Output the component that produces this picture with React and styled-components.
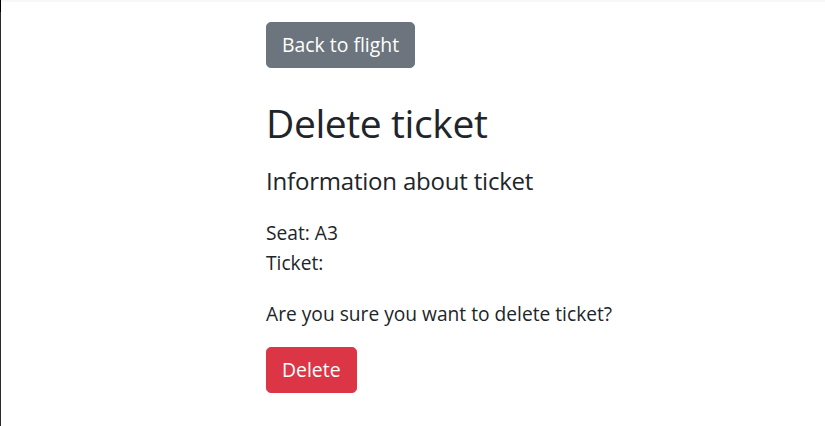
import React from "react";
import styled, { createGlobalStyle } from "styled-components";

const GlobalStyle = createGlobalStyle`
  html, body {
    margin: 0;
    padding: 0;
    background: #ffffff;
  }
  body {
    font-family: "Open Sans", "Noto Sans", sans-serif;
    color: #212529;
  }
`;

const Frame = styled.div`
  min-height: 426px;
  box-sizing: border-box;
  border-left: 1px solid #2b2b2b;
  border-top: 2px solid #f7f7f7;
  position: relative;

  &::before {
    content: "";
    position: absolute;
    left: -1px;
    top: -2px;
    width: 1px;
    height: 12px;
    background: #000;
  }
`;

const Container = styled.main`
  padding: 20px 0 0 265px;
  display: flex;
  flex-direction: column;
  align-items: flex-start;
`;

const Button = styled.button`
  font-family: inherit;
  font-size: 19.4px;
  line-height: 28px;
  padding: 8px 15px;
  height: 46px;
  border: 1px solid ${(p) => (p.$variant === "danger" ? "#dc3545" : "#6c757d")};
  background: ${(p) => (p.$variant === "danger" ? "#dc3545" : "#6c757d")};
  color: #fff;
  border-radius: 4.8px;
  cursor: pointer;
`;

const Title = styled.h1`
  margin: 32px 0 0;
  font-size: 39px;
  font-weight: 400;
  letter-spacing: -0.4px;
  line-height: 1.2;
`;

const Subtitle = styled.h4`
  margin: 20px 0 0;
  font-size: 24px;
  font-weight: 400;
  letter-spacing: -0.2px;
  line-height: 1.2;
`;

const Info = styled.div`
  margin-top: 22px;
  font-size: 19.2px;
  line-height: 30px;
`;

const Question = styled.p`
  margin: 21px 0 0;
  font-size: 19.2px;
  line-height: 29px;
`;

const Form = styled.form`
  margin-top: 19px;
`;

export default function App() {
  return (
    <>
      <GlobalStyle />
      <Frame>
        <Container>
          <Button type="button">Back to flight</Button>
          <Title>Delete ticket</Title>
          <Subtitle>Information about ticket</Subtitle>
          <Info>
            <div>Seat: A3</div>
            <div>Ticket: </div>
          </Info>
          <Question>Are you sure you want to delete ticket?</Question>
          <Form onSubmit={(e) => e.preventDefault()}>
            <Button type="submit" $variant="danger">
              Delete
            </Button>
          </Form>
        </Container>
      </Frame>
    </>
  );
}
